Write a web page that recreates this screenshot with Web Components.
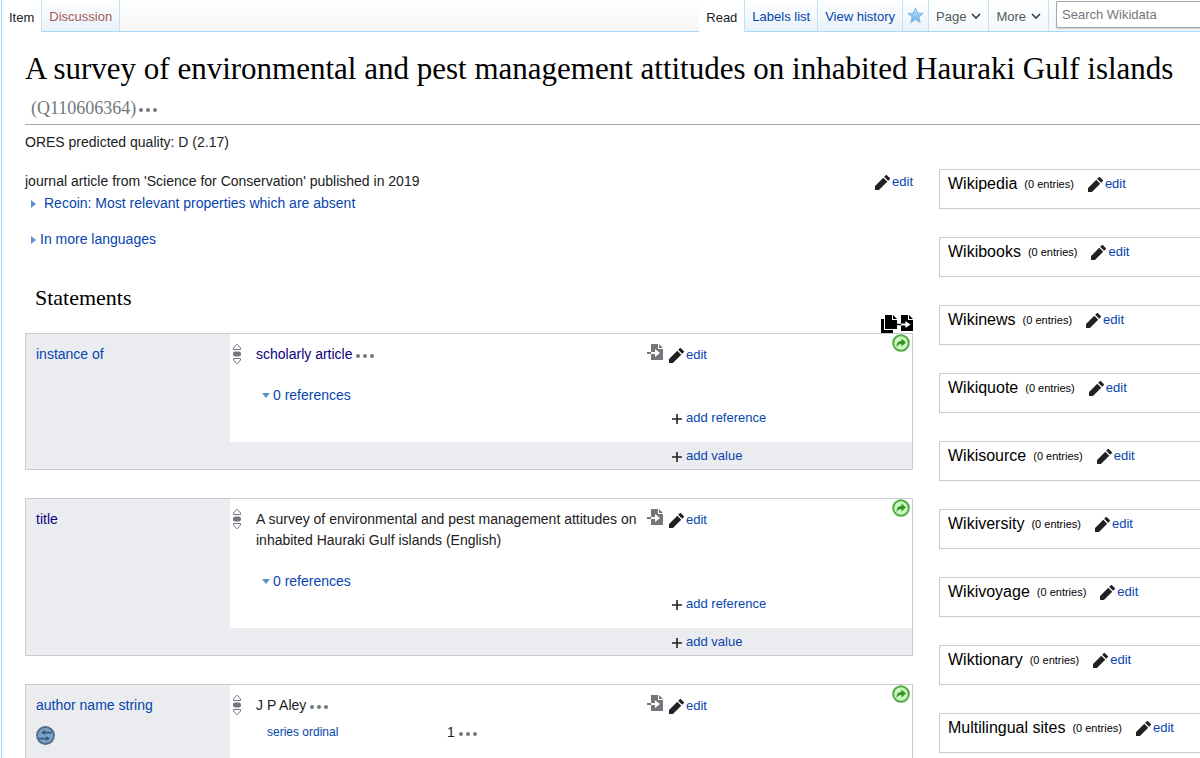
<!DOCTYPE html>
<html lang="en">
<head>
<meta charset="utf-8">
<title>A survey of environmental and pest management attitudes on inhabited Hauraki Gulf islands - Wikidata</title>
<style>
    html {
        scrollbar-width: none;
    }
    body {
        margin: 0;
        background: #fff;
        color: #202122;
        font: 14px/21px "Liberation Sans", Arial, sans-serif;
        --link: #0645ad;
        --visited: #0b0080;
        --line: #c8ccd1;
        --shade: #eaecf0;
    }
</style>
</head>
<body>
<wd-page>
    <wd-header slot="header"></wd-header>
    <wd-title slot="title" entity="Q110606364">A survey of environmental and pest management attitudes on inhabited Hauraki Gulf islands</wd-title>
    <wd-description>journal article from 'Science for Conservation' published in 2019</wd-description>
    <wd-statements>
        <wd-statement property="instance of" references="0" editable>
            <a slot="value" href="#Q13442814" style="color: var(--visited); text-decoration: none">scholarly article</a>
            <wd-dots slot="value"></wd-dots>
        </wd-statement>
        <wd-statement property="title" visited references="0" editable>
            <span slot="value">A survey of environmental and pest management attitudes on inhabited Hauraki Gulf islands (English)</span>
        </wd-statement>
        <wd-statement property="author name string" convert>
            <span slot="value">J P Aley</span>
            <wd-dots slot="value"></wd-dots>
            <wd-qualifier slot="qualifiers" name="series ordinal">1</wd-qualifier>
        </wd-statement>
    </wd-statements>
    <wd-sitelinks slot="aside">
        <wd-site>Wikipedia</wd-site>
        <wd-site>Wikibooks</wd-site>
        <wd-site>Wikinews</wd-site>
        <wd-site>Wikiquote</wd-site>
        <wd-site>Wikisource</wd-site>
        <wd-site>Wikiversity</wd-site>
        <wd-site>Wikivoyage</wd-site>
        <wd-site>Wiktionary</wd-site>
        <wd-site>Multilingual sites</wd-site>
    </wd-sitelinks>
</wd-page>

<script>
const linkStyles = `
    a { color: var(--link); text-decoration: none; }
    a:hover { text-decoration: underline; }
`;

// name: [width, height, viewBox, shapes]
const icons = {
    pencil: [15, 15, '1 1 18 18', '<path fill="#202122" d="m16.77 8 1.94-2a1 1 0 0 0 0-1.41l-3.34-3.3a1 1 0 0 0-1.41 0L12 3.23zM1 14.25V19h4.75l9.96-9.96-4.75-4.75z"/>'],
    plus: [10, 10, '0 0 10 10', '<path stroke="#202122" stroke-width="1.6" d="M5 0v10M0 5h10"/>'],
    right: [5, 8, '0 0 5 8', '<path fill="#5b93cc" d="M0 0l5 4-5 4z"/>'],
    down: [8, 5, '0 0 8 5', '<path fill="#5b93cc" d="M0 0h8L4 5z"/>'],
    chevron: [10, 7, '0 0 10 7', '<path fill="none" stroke="#404244" stroke-width="1.7" d="M1 1l4 4 4-4"/>'],
    dots: [18, 4, '0 0 18 4', '<g fill="#72777d"><circle cx="2" cy="2" r="2"/><circle cx="9" cy="2" r="2"/><circle cx="16" cy="2" r="2"/></g>'],
    rank: [8, 20, '0 0 8 20', `
        <path fill="#fff" stroke="#72777d" d="M3.500.5h1l3 3.500v1.500h-7V4z"/>
        <rect y="7.500" width="8" height="5" rx="2.300" fill="#72777d"/>
        <path fill="#fff" stroke="#72777d" d="M3.500 19.500h1l3-3.500v-1.500h-7V16z"/>`],
    star: [17, 17, '0 0 17 17', `
        <defs><linearGradient id="g" x2="0" y2="1"><stop stop-color="#c5e4fa"/><stop offset="1" stop-color="#62acea"/></linearGradient></defs>
        <path fill="url(#g)" stroke="#7cb5e4" stroke-linejoin="round" d="M8.500 1l2.100 5.100 5.400.4-4.200 3.500 1.400 5.500-4.700-3-4.700 3 1.400-5.500L1 6.500l5.400-.4z"/>`],
    paste: [16, 16, '0 0 16 16', `
        <path fill="#72777d" d="M4 0h7v5h5v11H4z"/>
        <path fill="#72777d" d="M12 0v4h4z"/>
        <path stroke="#72777d" stroke-width="2" d="M0 9h4"/>
        <path fill="#fff" d="M4 8h4V5l5 4-5 4v-3H4z"/>`],
    copy: [32, 18, '0 0 32 18', `
        <path d="M0 4h3v11h9v3H0z"/>
        <path d="M4 0h7v5h5v9H4z"/><path d="M12 0v4h4z"/>
        <path d="M20 0h7v5h5v11H20z"/><path d="M28 0v4h4z"/>
        <path stroke="#000" stroke-width="1.500" d="M15 9.500h6"/>
        <path fill="#fff" d="M20 8.500h4.500V6l5 3.500-5 3.500v-2.500H20z"/>`],
    arrow: [18, 18, '0 0 18 18', `
        <circle cx="9" cy="9" r="7.800" fill="#c9f7bd" stroke="#53aa42" stroke-width="2"/>
        <path fill="#369326" d="M4.500 13c0-4 1.700-6 5-6V4.500L14 8.500l-4.500 4V10C7 10 5.700 11 4.500 13z"/>`],
    convert: [19, 19, '0 0 19 19', `
        <circle cx="9.500" cy="9.500" r="8.500" fill="#7da2ca" stroke="#526a86" stroke-width="1.800"/>
        <path fill="#3c597b" d="M5 6.500L9 4v1.700h7v1.800H9V9zM14 12.500L10 10v1.700H3v1.800h7V15z"/>`]
};

class WdIcon extends HTMLElement {
    constructor() {
        super();
        this.attachShadow({ mode: 'open' });
    }

    connectedCallback() {
        const [width, height, box, shapes] = icons[this.getAttribute('name')];
        this.shadowRoot.innerHTML = `
            <style>
                :host { display: inline-flex; flex: none; }
                svg { display: block; }
            </style>
            <svg width="${width}" height="${height}" viewBox="${box}" aria-hidden="true">${shapes}</svg>
        `;
    }
}

class WdDots extends HTMLElement {
    constructor() {
        super();
        this.attachShadow({ mode: 'open' });
        this.shadowRoot.innerHTML = `
            <style>
                :host { display: inline-flex; padding-top: 2px; }
                button { display: flex; padding: 0; border: 0; background: none; cursor: pointer; }
            </style>
            <button aria-label="More"><wd-icon name="dots"></wd-icon></button>
        `;
    }
}

// Link with an icon in front, used for edit and add actions
class WdAction extends HTMLElement {
    constructor() {
        super();
        this.attachShadow({ mode: 'open' });
    }

    connectedCallback() {
        this.shadowRoot.innerHTML = `
            <style>
                ${linkStyles}
                :host { display: inline-flex; font-size: 13px; }
                a { display: flex; align-items: center; }
                span { display: flex; justify-content: center; width: 15px; margin-right: 2px; padding-top: 2px; }
            </style>
            <a href="#action"><span><wd-icon name="${this.getAttribute('icon')}"></wd-icon></span><slot></slot></a>
        `;
    }
}

class WdHeader extends HTMLElement {
    constructor() {
        super();
        this.attachShadow({ mode: 'open' });
        this.shadowRoot.innerHTML = `
            <style>
                ${linkStyles}
                :host {
                    display: flex;
                    justify-content: space-between;
                    height: 31px;
                    border-bottom: 1px solid #a7d7f9;
                    background: linear-gradient(#fff, #f6f6f6);
                    font-size: 13px;
                }
                nav, .right { display: flex; }
                nav > * {
                    display: flex;
                    align-items: center;
                    gap: 5px;
                    box-sizing: border-box;
                    height: 31px;
                    padding: 2px 7px 0;
                    border: 0;
                    border-right: 1px solid #c3e1f6;
                    background: linear-gradient(#fff, #e8f2f8);
                    font: inherit;
                    white-space: nowrap;
                }
                nav .on { height: 32px; background: #fff; color: #202122; }
                nav .new { color: #a55858; }
                nav .star { padding: 0 4px; }
                nav button { background: linear-gradient(#fff, #f4f8fb); color: #54595d; }
                form { margin: 1px 0 0 7px; }
                input {
                    display: block;
                    box-sizing: border-box;
                    width: 144px;
                    height: 27px;
                    padding: 0 5px;
                    border: 1px solid #a2a9b1;
                    border-right: 0;
                    border-radius: 2px 0 0 2px;
                    box-shadow: 0 1px 1px #c8ccd1;
                    font: inherit;
                }
                input::placeholder { color: #72777d; }
            </style>
            <nav aria-label="Namespaces">
                <a class="on" href="#item">Item</a>
                <a class="new" href="#talk">Discussion</a>
            </nav>
            <div class="right">
                <nav aria-label="Views">
                    <a class="on" href="#read">Read</a>
                    <a href="#labels">Labels list</a>
                    <a href="#history">View history</a>
                    <a class="star" href="#watch" aria-label="Watch"><wd-icon name="star"></wd-icon></a>
                    <button>Page <wd-icon name="chevron"></wd-icon></button>
                    <button>More <wd-icon name="chevron"></wd-icon></button>
                </nav>
                <form><input type="search" placeholder="Search Wikidata" aria-label="Search Wikidata"></form>
            </div>
        `;
    }
}

class WdTitle extends HTMLElement {
    constructor() {
        super();
        this.attachShadow({ mode: 'open' });
    }

    connectedCallback() {
        this.shadowRoot.innerHTML = `
            <style>
                :host { display: block; border-bottom: 1px solid #a2a9b1; }
                h1 {
                    margin: 0;
                    color: #000;
                    font: 31px/40px "Liberation Serif", Georgia, serif;
                }
                .id {
                    display: flex;
                    align-items: center;
                    gap: 3px;
                    padding: 4px 0 0 6px;
                    color: #72777d;
                    font-size: 18px;
                    line-height: 31px;
                }
            </style>
            <h1><slot></slot><span class="id">(${this.getAttribute('entity')})<wd-dots></wd-dots></span></h1>
        `;
    }
}

class WdDescription extends HTMLElement {
    constructor() {
        super();
        this.attachShadow({ mode: 'open' });
        this.shadowRoot.innerHTML = `
            <style>
                ${linkStyles}
                :host { display: block; }
                .text { display: flex; justify-content: space-between; }
                .toggle { display: flex; align-items: center; gap: 4px; padding-left: 6px; }
                .recoin { gap: 8px; margin-top: 1px; }
                .languages { margin-top: 15px; }
            </style>
            <div class="text"><slot></slot><wd-action icon="pencil">edit</wd-action></div>
            <a class="toggle recoin" href="#recoin"><wd-icon name="right"></wd-icon>Recoin: Most relevant properties which are absent</a>
            <a class="toggle languages" href="#languages"><wd-icon name="right"></wd-icon>In more languages</a>
        `;
    }
}

class WdStatements extends HTMLElement {
    constructor() {
        super();
        this.attachShadow({ mode: 'open' });
        this.shadowRoot.innerHTML = `
            <style>
                :host { display: block; }
                h2 { margin: 0 0 3px 10px; color: #000; font: 22px/28px "Liberation Serif", Georgia, serif; }
                .tools { display: flex; justify-content: flex-end; }
                .tools button { display: flex; padding: 0; border: 0; background: none; }
                .list { display: grid; gap: 28px; }
            </style>
            <h2>Statements</h2>
            <div class="tools"><button aria-label="Copy statements"><wd-icon name="copy"></wd-icon></button></div>
            <div class="list"><slot></slot></div>
        `;
    }
}

class WdStatement extends HTMLElement {
    constructor() {
        super();
        this.attachShadow({ mode: 'open' });
    }

    connectedCallback() {
        const references = this.getAttribute('references');
        this.shadowRoot.innerHTML = `
            <style>
                ${linkStyles}
                :host {
                    display: grid;
                    grid-template-columns: 204px minmax(0, 1fr);
                    position: relative;
                    border: 1px solid var(--line);
                    background: var(--shade);
                }
                button { display: flex; padding: 0; border: 0; background: none; cursor: pointer; }
                .property { padding: 10px; }
                .property button { margin-top: 10px; }
                .visited { color: var(--visited); }
                .claim { padding: 10px 0 14px; background: #fff; }
                .row { display: grid; grid-template-columns: 26px minmax(0, 1fr) 265px; }
                .rank { display: flex; height: 21px; padding-left: 3px; }
                .value { display: flex; align-items: center; gap: 4px; }
                .tools { display: flex; align-items: flex-start; gap: 6px; }
                .references { display: flex; align-items: center; gap: 3px; margin: 20px 0 1px 32px; }
                .add { display: grid; grid-template-columns: 1fr 243px; }
                .add wd-action { grid-column: 2; }
                .footer { padding: 3px 0; }
                .open { padding-bottom: 40px; }
                .jump { position: absolute; top: 0; right: 2px; }
            </style>
            <div class="property">
                <a class="${this.hasAttribute('visited') ? 'visited' : ''}" href="#property">${this.getAttribute('property')}</a>
                ${this.hasAttribute('convert') ? '<button aria-label="Convert to author"><wd-icon name="convert"></wd-icon></button>' : ''}
            </div>
            <div>
                <div class="claim ${references ? '' : 'open'}">
                    <div class="row">
                        <div class="rank"><wd-icon name="rank"></wd-icon></div>
                        <div class="value"><slot name="value"></slot></div>
                        <div class="tools">
                            <button aria-label="Copy claim"><wd-icon name="paste"></wd-icon></button>
                            <wd-action icon="pencil">edit</wd-action>
                        </div>
                    </div>
                    <slot name="qualifiers"></slot>
                    ${references ? `
                    <a class="references" href="#references"><wd-icon name="down"></wd-icon>${references} references</a>
                    <div class="add"><wd-action icon="plus">add reference</wd-action></div>` : ''}
                </div>
                ${references ? '<div class="add footer"><wd-action icon="plus">add value</wd-action></div>' : ''}
            </div>
            <button class="jump" aria-label="Move claim"><wd-icon name="arrow"></wd-icon></button>
        `;
    }
}

class WdQualifier extends HTMLElement {
    constructor() {
        super();
        this.attachShadow({ mode: 'open' });
    }

    connectedCallback() {
        this.shadowRoot.innerHTML = `
            <style>
                ${linkStyles}
                :host { display: grid; grid-template-columns: 180px 1fr; margin: 6px 0 0 37px; }
                a { font-size: 12px; }
                div { display: flex; align-items: center; gap: 4px; }
            </style>
            <a href="#qualifier">${this.getAttribute('name')}</a>
            <div><slot></slot><wd-dots></wd-dots></div>
        `;
    }
}

class WdSitelinks extends HTMLElement {
    constructor() {
        super();
        this.attachShadow({ mode: 'open' });
        this.shadowRoot.innerHTML = `
            <style>
                :host { display: grid; align-content: start; gap: 28px; }
            </style>
            <slot></slot>
        `;
    }
}

class WdSite extends HTMLElement {
    constructor() {
        super();
        this.attachShadow({ mode: 'open' });
        this.shadowRoot.innerHTML = `
            <style>
                :host {
                    display: flex;
                    align-items: center;
                    padding: 3px 8px 14px;
                    border: 1px solid var(--line);
                    border-right: 0;
                    white-space: nowrap;
                }
                h3 { margin: 0; color: #000; font: 16px/21px "Liberation Sans", Arial, sans-serif; }
                small { margin: 0 14px 0 7px; padding-top: 2px; color: #000; font-size: 11px; line-height: 19px; }
            </style>
            <h3><slot></slot></h3>
            <small>(0 entries)</small>
            <wd-action icon="pencil">edit</wd-action>
        `;
    }
}

class WdPage extends HTMLElement {
    constructor() {
        super();
        this.attachShadow({ mode: 'open' });
        this.shadowRoot.innerHTML = `
            <style>
                :host { display: block; margin-left: 1px; border-left: 1px solid #a7d7f9; }
                main { padding: 17px 0 0 23px; }
                .quality { margin: 7px 0 16px; }
                .columns { display: grid; grid-template-columns: minmax(0, 1fr) 261px; gap: 26px; }
                .entity { display: grid; align-content: start; gap: 34px; padding-top: 2px; }
            </style>
            <slot name="header"></slot>
            <main>
                <slot name="title"></slot>
                <p class="quality">ORES predicted quality: D (2.17)</p>
                <div class="columns">
                    <div class="entity"><slot></slot></div>
                    <slot name="aside"></slot>
                </div>
            </main>
        `;
    }
}

customElements.define('wd-icon', WdIcon);
customElements.define('wd-dots', WdDots);
customElements.define('wd-action', WdAction);
customElements.define('wd-header', WdHeader);
customElements.define('wd-title', WdTitle);
customElements.define('wd-description', WdDescription);
customElements.define('wd-statements', WdStatements);
customElements.define('wd-statement', WdStatement);
customElements.define('wd-qualifier', WdQualifier);
customElements.define('wd-sitelinks', WdSitelinks);
customElements.define('wd-site', WdSite);
customElements.define('wd-page', WdPage);
</script>
</body>
</html>
